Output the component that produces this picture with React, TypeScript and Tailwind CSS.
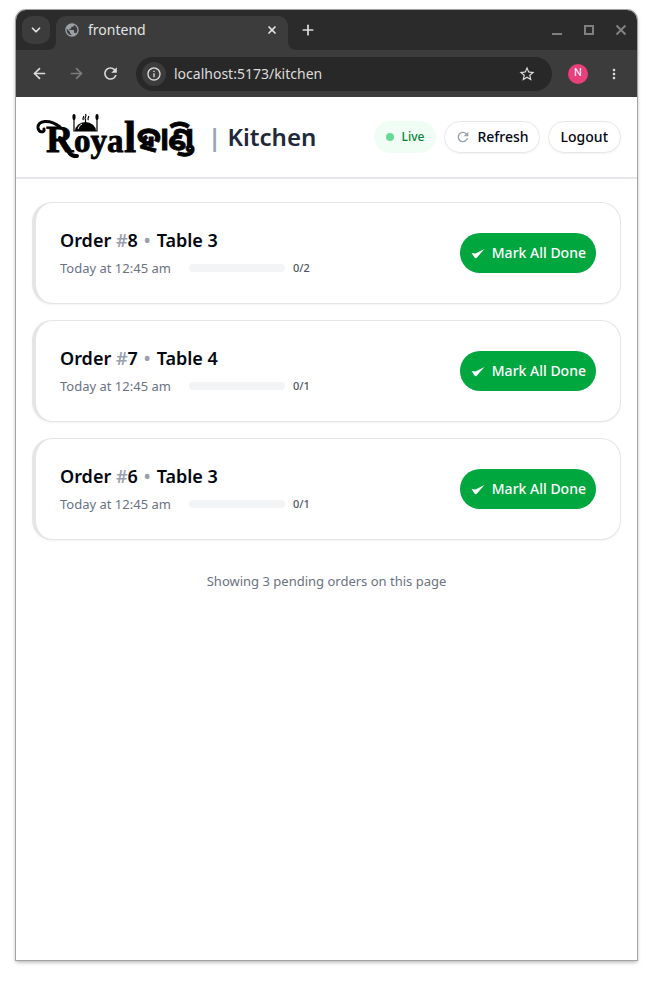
import { ArrowLeft, ArrowRight, ChevronDown, Plus, X } from "lucide-react";
import { MdInfoOutline, MdMoreVert, MdPublic, MdRefresh, MdStarBorder } from "react-icons/md";

const orders = [
  { id: 8, table: 3, time: "Today at 12:45 am", done: 0, total: 2 },
  { id: 7, table: 4, time: "Today at 12:45 am", done: 0, total: 1 },
  { id: 6, table: 3, time: "Today at 12:45 am", done: 0, total: 1 },
];

function TabStrip() {
  return (
    <div className="flex h-10 items-end bg-[#2b2b2b] px-2 pl-1.5">
      <button aria-label="Search tabs" className="mb-1.5 mr-1.5 flex size-7 items-center justify-center rounded-[10px] bg-[#3c3c3c] text-[#e3e3e3]">
        <ChevronDown size={14} strokeWidth={3} />
      </button>
      <div className="relative flex h-[34px] w-[232px] items-center rounded-t-[10px] bg-[#3c3c3c] pb-1.5 pl-2 pr-2.5">
        <svg className="absolute -left-2 bottom-0 size-2 text-[#3c3c3c]" viewBox="0 0 8 8" fill="currentColor"><path d="M8 0v8H0a8 8 0 0 0 8-8z" /></svg>
        <svg className="absolute -right-2 bottom-0 size-2 text-[#3c3c3c]" viewBox="0 0 8 8" fill="currentColor"><path d="M0 0v8h8a8 8 0 0 1-8-8z" /></svg>
        <MdPublic className="size-4 text-[#9aa0a6]" />
        <span className="ml-2 text-sm text-[#e3e3e3]">frontend</span>
        <button aria-label="Close tab" className="ml-auto text-[#e3e3e3]"><X size={12} strokeWidth={3.5} /></button>
      </div>
      <button aria-label="New tab" className="mb-3 ml-3 text-[#dcdcdc]"><Plus size={16} strokeWidth={2.6} /></button>
      <div className="mb-3 ml-auto flex items-center gap-4 text-[#808080]">
        <button aria-label="Minimize"><svg className="size-4" viewBox="0 0 16 16"><path d="M3 12h10" stroke="currentColor" strokeWidth="2" /></svg></button>
        <button aria-label="Maximize"><svg className="size-4" viewBox="0 0 16 16"><path d="M4 4h8v8H4z" fill="none" stroke="currentColor" strokeWidth="2" /></svg></button>
        <button aria-label="Close window"><svg className="size-4" viewBox="0 0 16 16"><path d="m3.5 3.5 9 9m0-9-9 9" stroke="currentColor" strokeWidth="2" /></svg></button>
      </div>
    </div>
  );
}

function Toolbar() {
  return (
    <div className="flex h-[47px] items-center bg-[#3c3c3c] px-[15px] text-[#dcdcdc]">
      <button aria-label="Back"><ArrowLeft size={17} strokeWidth={2.4} /></button>
      <button aria-label="Forward" className="ml-5 text-[#7d7d7d]"><ArrowRight size={17} strokeWidth={2.4} /></button>
      <button aria-label="Reload" className="ml-4"><MdRefresh className="size-[19px]" /></button>
      <div className="ml-4 flex h-[34px] min-w-0 flex-1 items-center rounded-full bg-[#282828] pl-1.5 pr-4">
        <span className="flex size-6 shrink-0 items-center justify-center rounded-full bg-[#3c3c3c]"><MdInfoOutline className="size-4" /></span>
        <input aria-label="Address" readOnly defaultValue="localhost:5173/kitchen" className="ml-2 min-w-0 flex-1 bg-transparent text-sm outline-none" />
        <button aria-label="Bookmark this page"><MdStarBorder className="size-[18px]" /></button>
      </div>
      <button aria-label="Profile" className="ml-4 flex size-5 items-center justify-center rounded-full bg-[#e8407a] font-[Roboto,sans-serif] text-[11px] text-white">N</button>
      <button aria-label="Menu" className="ml-[18px]"><MdMoreVert className="size-4" /></button>
    </div>
  );
}

function Logo() {
  return (
    <svg className="h-16 w-[164px] shrink-0" viewBox="0 -8 164 64" role="img" aria-label="Royal Handi">
      <g className="font-['Liberation_Serif',serif] font-bold" stroke="#000" strokeWidth="0.8">
        <text x="10" y="39" fontSize="38">R</text>
        <text x="38" y="39" fontSize="33">oya</text>
        <text x="88" y="39" fontSize="44">l</text>
      </g>
      <text x="101" y="37" fontSize="32" stroke="#000" strokeWidth="0.8" className="font-['Noto_Sans_Oriya','Noto_Sans',sans-serif] font-bold">ହାଣ୍ଡି</text>
      {/* swashes on both ends of the R */}
      <path d="M24 14C14 6 1 7 2 15c1 5 7 5 6 1" fill="none" stroke="#000" strokeWidth="3" strokeLinecap="round" />
      <path d="M24 25c8 3 5 19 17 18" fill="none" stroke="#000" strokeWidth="4" strokeLinecap="round" />
      {/* cloche with cutlery */}
      <path d="M39 18a10.500 9 0 0 1 21 0z" />
      <path d="M38 4v14h23V4" fill="none" stroke="#000" strokeWidth="1.2" />
      <ellipse cx="38" cy="4" rx="1.600" ry="3" /><ellipse cx="61" cy="4" rx="1.600" ry="3" />
      <path d="M49.500 10V6m-2 1c-2-2 1-2 0-4m2 4c-2-3 2-3 0-6m3 6c-2-2 1-2 0-4" fill="none" stroke="#000" strokeWidth="1.200" />
      <path d="M42 16q1-4 4-5" fill="none" stroke="#fff" strokeWidth="1" />
    </svg>
  );
}

function Header() {
  return (
    <header className="flex h-[82px] items-center border-b-2 border-gray-200 pl-5 pr-4">
      <Logo />
      <h1 className="ml-2 text-2xl font-semibold text-gray-800"><span className="font-bold text-gray-400">|</span> Kitchen</h1>
      <div className="ml-auto flex items-center gap-2 text-sm font-medium text-gray-950">
        <span className="flex h-8 items-center gap-2 rounded-full bg-green-50 px-3 text-xs text-green-700"><span className="size-2 rounded-full bg-[#68d994]" />Live</span>
        <button className="flex h-8 items-center gap-1.5 rounded-full border border-gray-200 px-2.5 shadow-xs"><MdRefresh className="size-4 text-gray-400" />Refresh</button>
        <button className="h-8 rounded-full border border-gray-200 px-3 shadow-xs">Logout</button>
      </div>
    </header>
  );
}

function OrderCard({ order }: { order: (typeof orders)[number] }) {
  return (
    <li className="flex h-[102px] items-center justify-between rounded-[20px] border border-l-4 border-[#e5e5e5] px-6 shadow-xs">
      <div className="pt-0.5">
        <h2 className="text-lg/7 font-semibold text-gray-950">
          Order <span className="text-gray-400">#</span>{order.id}<span className="mx-1.5 text-gray-400">•</span>Table {order.table}
        </h2>
        <div className="flex items-center text-[13px]/7 text-gray-500">
          {order.time}
          <div className="ml-[18px] h-2 w-24 overflow-hidden rounded-full bg-gray-100">
            <div className="h-full bg-green-500" style={{ width: `${(order.done / order.total) * 100}%` }} />
          </div>
          <span className="ml-2 text-[11px] font-medium text-gray-600">{order.done}/{order.total}</span>
        </div>
      </div>
      <button className="flex h-10 items-center gap-1.5 rounded-full bg-[#00a63e] px-2.5 text-sm font-medium text-white">
        <svg className="size-4" viewBox="0 0 16 16" fill="currentColor"><path d="m1.500 8 4 .5 9-4.500-8 9-1.500.2z" /></svg>
        Mark All Done
      </button>
    </li>
  );
}

export default function App() {
  return (
    <div className="flex min-h-screen flex-col bg-white px-4 pb-8 pt-2.5 font-['Noto_Sans',sans-serif]">
      <div className="flex flex-1 flex-col overflow-hidden rounded-t-[10px] bg-white shadow-[0_0_0_1px_#a3a3a3,0_2px_4px_#00000059]">
        <TabStrip />
        <Toolbar />
        <Header />
        <main className="px-4 pt-[23px]">
          <ul className="grid gap-4">{orders.map((order) => <OrderCard key={order.id} order={order} />)}</ul>
          <p className="mt-[31px] text-center text-[13px]/5 text-gray-500">Showing {orders.length} pending orders on this page</p>
        </main>
      </div>
    </div>
  );
}
